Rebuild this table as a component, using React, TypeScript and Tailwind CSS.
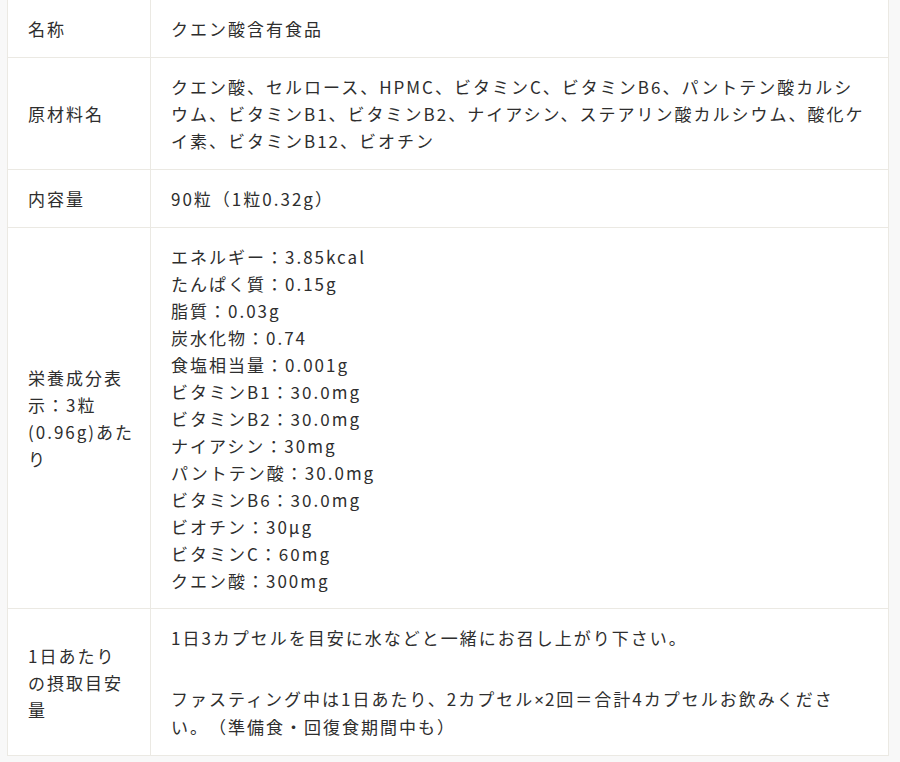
import React from "react";

const border = "border-[#ebe9e3]";

function Row({ label, children, last }: { label: React.ReactNode; children: React.ReactNode; last?: boolean }) {
  return (
    <div className={`flex ${last ? "" : `border-b ${border}`}`}>
      <div className={`w-[143px] shrink-0 border-r ${border} px-5 flex items-center`}>
        <div className="whitespace-nowrap">{label}</div>
      </div>
      <div className="flex-1 px-5 py-[15px]">{children}</div>
    </div>
  );
}

const nutrition = [
  "エネルギー：3.85kcal",
  "たんぱく質：0.15g",
  "脂質：0.03g",
  "炭水化物：0.74",
  "食塩相当量：0.001g",
  "ビタミンB1：30.0mg",
  "ビタミンB2：30.0mg",
  "ナイアシン：30mg",
  "パントテン酸：30.0mg",
  "ビタミンB6：30.0mg",
  "ビオチン：30μg",
  "ビタミンC：60mg",
  "クエン酸：300mg",
];

export default function App() {
  return (
    <div
      className="min-h-[762px] bg-[#f8f8f8] text-[#2e2e2e] text-[17px] leading-[27px] tracking-[2px] [text-spacing-trim:space-all] overflow-hidden"
      style={{ fontFamily: '"Noto Sans CJK JP", "Noto Sans", sans-serif' }}
    >
      <div className={`-mt-px ml-[7px] w-[882px] bg-white border ${border}`}>
        <Row label="名称">
          <div>クエン酸含有食品</div>
        </Row>
        <Row label="原材料名">
          <div className="whitespace-nowrap">クエン酸、セルロース、HPMC、ビタミンC、ビタミンB6、パントテン酸カルシ</div>
          <div className="whitespace-nowrap">ウム、ビタミンB1、ビタミンB2、ナイアシン、ステアリン酸カルシウム、酸化ケ</div>
          <div className="whitespace-nowrap">イ素、ビタミンB12、ビオチン</div>
        </Row>
        <Row label="内容量">
          <div>90粒（1粒0.32g）</div>
        </Row>
        <Row
          label={
            <>
              栄養成分表
              <br />
              示：3粒
              <br />
              (0.96g)あた
              <br />り
            </>
          }
        >
          <div className="-mb-px">
            {nutrition.map((n) => (
              <div key={n}>{n}</div>
            ))}
          </div>
        </Row>
        <Row
          label={
            <>
              1日あたり
              <br />
              の摂取目安
              <br />量
            </>
          }
          last
        >
          <div>1日3カプセルを目安に水などと一緒にお召し上がり下さい。</div>
          <div className="mt-[34px]">
            ファスティング中は1日あたり、2カプセル
            <span className="tracking-[1px]" style={{ fontFamily: '"Noto Sans", sans-serif' }}>×</span>
            2回＝合計4カプセルお飲みくださ
            <br />
            い。（準備食・回復食期間中も）
          </div>
        </Row>
      </div>
    </div>
  );
}
